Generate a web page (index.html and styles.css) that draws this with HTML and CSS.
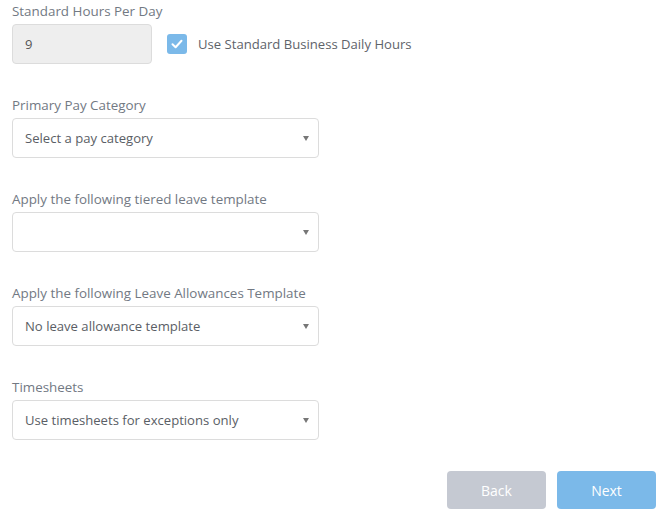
FILE: index.html
```html
<!DOCTYPE html>
<html>
<head>
<meta charset="utf-8">
<link rel="stylesheet" href="styles.css">
</head>
<body>
<div class="page">
  <div class="field">
    <div class="label">Standard Hours Per Day</div>
    <div class="hours-row">
      <div class="input disabled">9</div>
      <label class="check">
        <span class="box">
          <svg width="14" height="14" viewBox="0 0 14 14"><path d="M2.5 7.3 L5.6 10.2 L11.5 3.8" fill="none" stroke="#fff" stroke-width="2" stroke-linecap="round" stroke-linejoin="round"/></svg>
        </span>
        <span class="check-text">Use Standard Business Daily Hours</span>
      </label>
    </div>
  </div>
  <div class="field">
    <div class="label">Primary Pay Category</div>
    <div class="select"><span>Select a pay category</span><i class="caret"></i></div>
  </div>
  <div class="field">
    <div class="label">Apply the following tiered leave template</div>
    <div class="select"><span></span><i class="caret"></i></div>
  </div>
  <div class="field">
    <div class="label">Apply the following Leave Allowances Template</div>
    <div class="select"><span>No leave allowance template</span><i class="caret"></i></div>
  </div>
  <div class="field">
    <div class="label">Timesheets</div>
    <div class="select"><span>Use timesheets for exceptions only</span><i class="caret"></i></div>
  </div>
  <div class="actions">
    <button class="btn back">Back</button>
    <button class="btn next">Next</button>
  </div>
</div>
</body>
</html>
```
FILE: styles.css
```css
html, body {
  margin: 0;
  padding: 0;
  background: #fff;
}
.page {
  font-family: "Open Sans", "Liberation Sans", sans-serif;
  padding: 3px 8px 0 12px;
  width: 644px;
}
.field {
  margin-bottom: 33px;
}
.label {
  font-size: 13.4px;
  line-height: 16px;
  color: #727983;
  margin-bottom: 5px;
}
.hours-row {
  display: flex;
  align-items: center;
}
.input {
  box-sizing: border-box;
  width: 140px;
  height: 40px;
  border: 1px solid #dcdcdc;
  border-radius: 4px;
  padding: 0 12px;
  display: flex;
  align-items: center;
  font-size: 13px;
  color: #555;
}
.input.disabled {
  background: #eeeeee;
}
.check {
  display: flex;
  align-items: center;
  margin-left: 15px;
}
.box {
  width: 20px;
  height: 20px;
  border-radius: 3px;
  background: #7bb9e9;
  display: flex;
  align-items: center;
  justify-content: center;
}
.check-text {
  margin-left: 11px;
  font-size: 13.1px;
  color: #5e636a;
}
.select {
  box-sizing: border-box;
  width: 307px;
  height: 40px;
  border: 1px solid #dcdcdc;
  border-radius: 4px;
  padding: 0 9px 0 12px;
  display: flex;
  align-items: center;
  justify-content: space-between;
  font-size: 13.1px;
  color: #5a5e65;
}
.caret {
  width: 0;
  height: 0;
  border-left: 3px solid transparent;
  border-right: 3px solid transparent;
  border-top: 5px solid #777;
}
.actions {
  display: flex;
  justify-content: flex-end;
  gap: 11px;
  margin-top: -2px;
}
.btn {
  width: 99px;
  height: 38px;
  border: none;
  border-radius: 4px;
  color: #fff;
  font-family: "Open Sans", "Liberation Sans", sans-serif;
  font-size: 14px;
}
.back {
  background: #c5c9d2;
}
.next {
  background: #7bb9e9;
}
```
